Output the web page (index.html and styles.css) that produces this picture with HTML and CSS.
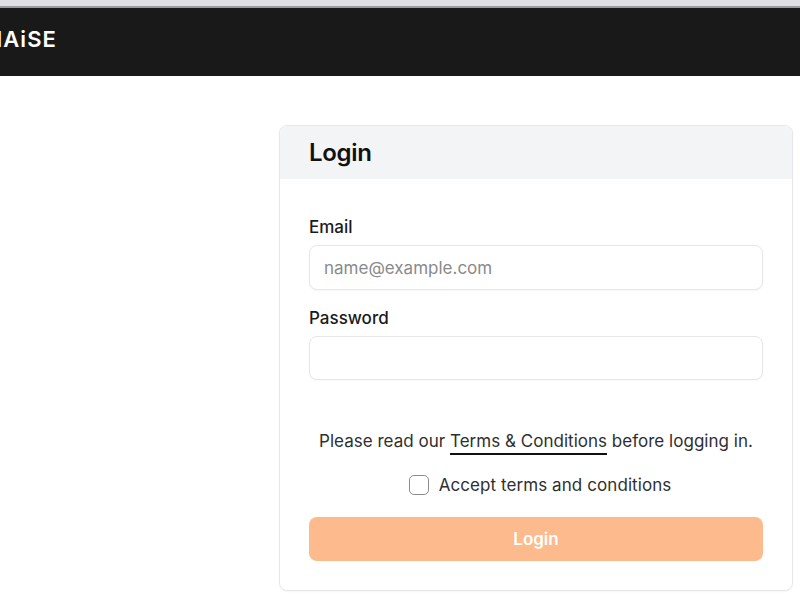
FILE: index.html
```html
<!DOCTYPE html>
<html lang="en">
<head>
<meta charset="utf-8">
<title>Login</title>
<link rel="stylesheet" href="styles.css">
</head>
<body>
<div class="chrome"></div>
<header class="topbar"><span class="logo">MAiSE</span></header>
<main class="page">
  <section class="card">
    <div class="card-head"><h1>Login</h1></div>
    <form class="card-body">
      <label class="field-label" for="email">Email</label>
      <input class="field" id="email" type="email" placeholder="name@example.com">
      <label class="field-label second" for="password">Password</label>
      <input class="field" id="password" type="password">
      <p class="terms">Please read our <a href="#">Terms &amp; Conditions</a> before logging in.</p>
      <div class="accept">
        <span class="check"></span>
        <span>Accept terms and conditions</span>
      </div>
      <button class="submit" type="button">Login</button>
    </form>
  </section>
</main>
</body>
</html>
```
FILE: styles.css
```css
* { box-sizing: border-box; }
html, body { margin: 0; height: 100%; overflow: hidden; background: #fff; }
body { font-family: Inter, "Liberation Sans", sans-serif; color: #1f2937; }
.chrome { height: 8px; background: #dedee3; border-bottom: 2px solid #9a9a9e; }
.topbar { height: 68px; background: #191919; display: flex; align-items: center; overflow: hidden; }
.logo { margin-left: -18px; margin-top: -7px; color: #fff; font-size: 22px; font-weight: 600; letter-spacing: 1px; }
.page { display: flex; justify-content: flex-end; padding: 49px 7px 0 0; }
.card { width: 514px; height: 466px; border: 1px solid #e5e7eb; border-radius: 8px; overflow: hidden; background: #fff; box-shadow: 0 1px 2px rgba(0,0,0,.04); }
.card-head { height: 53px; background: #f3f4f6; padding: 0 29px; display: flex; align-items: center; }
h1 { margin: 0; font-size: 24px; font-weight: 600; letter-spacing: -0.3px; color: #111; }
.card-body { padding: 38px 29px 0; display: flex; flex-direction: column; }
.field-label { font-size: 17px; line-height: 20px; font-weight: 500; color: #1a1a1a; height: 20px; margin-bottom: 8px; }
.field-label.second { margin-top: 18px; }
.field { width: 100%; height: 45px; border: 1px solid #e5e7eb; border-radius: 8px; padding: 0 14px; font: 17px Inter, sans-serif; background: #fff; box-shadow: 0 1px 2px rgba(0,0,0,.04); outline: none; }
#password { height: 44px; }
.field::placeholder { color: #8a8a8a; opacity: 1; }
.terms { margin: 49px 0 0; text-align: center; font-size: 17px; line-height: 24px; letter-spacing: 0.02px; color: #2f2f2f; }
.terms a { color: #2f2f2f; text-decoration: none; border-bottom: 2px solid #111; padding-bottom: 2px; }
.accept { display: flex; justify-content: center; align-items: center; gap: 10px; margin-top: 20px; padding-left: 8px; font-size: 17px; line-height: 24px; letter-spacing: 0.08px; color: #2f2f2f; }
.check { width: 20px; height: 20px; border: 1px solid #8b8b94; border-radius: 5px; background: #fff; }
.submit { margin-top: 20px; height: 44px; border: 0; border-radius: 8px; background: #fdba8c; color: #fff; font: 600 17px Inter, sans-serif; }
```
